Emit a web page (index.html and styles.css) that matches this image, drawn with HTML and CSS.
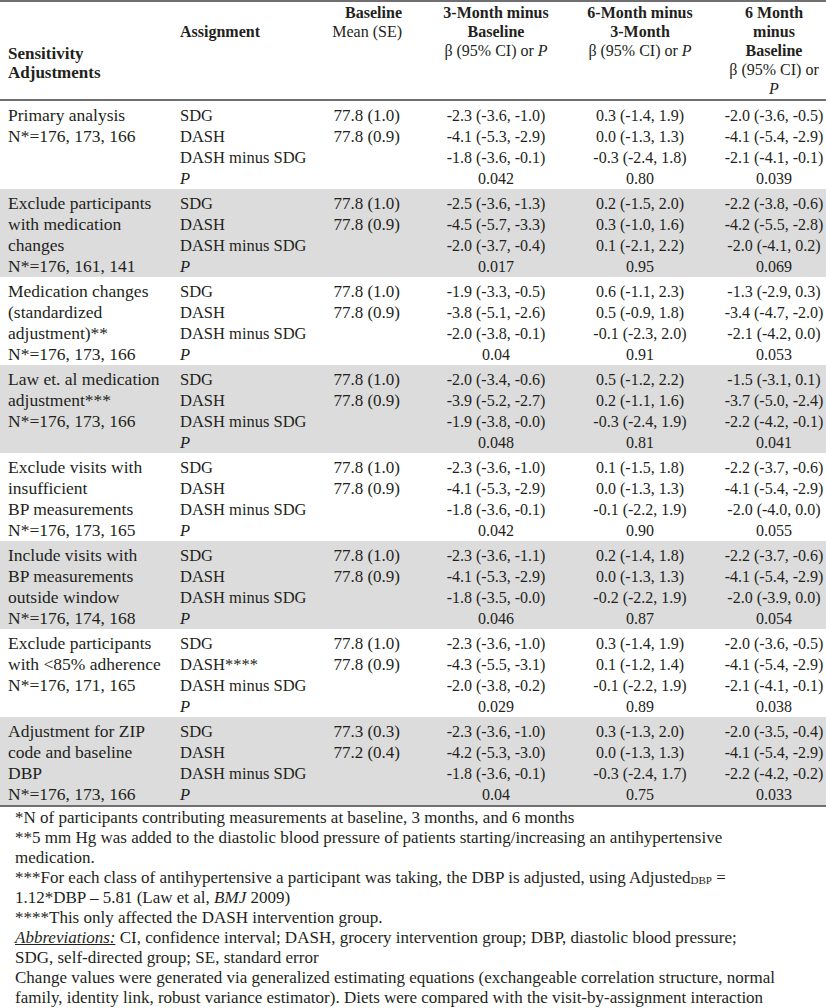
FILE: index.html
```html
<!DOCTYPE html>
<html lang="en">
<head>
<meta charset="utf-8">
<title>Sensitivity Adjustments</title>
<link rel="stylesheet" href="styles.css">
</head>
<body>
<table class="tbl">
  <colgroup>
    <col class="c1"><col class="c2"><col class="c3"><col class="c4"><col class="c5"><col class="c6">
  </colgroup>
  <thead>
    <tr>
      <th class="h-label"><b>Sensitivity<br>Adjustments</b></th>
      <th class="h-assign"><b>Assignment</b></th>
      <th class="h-base"><b>Baseline</b><br>Mean (SE)</th>
      <th class="h-num"><b>3-Month minus<br>Baseline</b><br>β (95% CI) or <i>P</i></th>
      <th class="h-num"><b>6-Month minus<br>3-Month</b><br>β (95% CI) or <i>P</i></th>
      <th class="h-num"><b>6 Month<br>minus<br>Baseline</b><br>β (95% CI) or<br><i>P</i></th>
    </tr>
  </thead>

  <tbody class="grp">
    <tr class="first"><td class="label" rowspan="4">Primary analysis<br>N*=176, 173, 166</td><td class="as">SDG</td><td class="bl">77.8 (1.0)</td><td class="num">-2.3 (-3.6, -1.0)</td><td class="num">0.3 (-1.4, 1.9)</td><td class="num">-2.0 (-3.6, -0.5)</td></tr>
    <tr><td class="as">DASH</td><td class="bl">77.8 (0.9)</td><td class="num">-4.1 (-5.3, -2.9)</td><td class="num">0.0 (-1.3, 1.3)</td><td class="num">-4.1 (-5.4, -2.9)</td></tr>
    <tr><td class="as">DASH minus SDG</td><td class="bl"></td><td class="num">-1.8 (-3.6, -0.1)</td><td class="num">-0.3 (-2.4, 1.8)</td><td class="num">-2.1 (-4.1, -0.1)</td></tr>
    <tr><td class="as"><i>P</i></td><td class="bl"></td><td class="num">0.042</td><td class="num">0.80</td><td class="num">0.039</td></tr>
  </tbody>

  <tbody class="grp shade">
    <tr class="first"><td class="label" rowspan="4">Exclude participants<br>with medication<br>changes<br>N*=176, 161, 141</td><td class="as">SDG</td><td class="bl">77.8 (1.0)</td><td class="num">-2.5 (-3.6, -1.3)</td><td class="num">0.2 (-1.5, 2.0)</td><td class="num">-2.2 (-3.8, -0.6)</td></tr>
    <tr><td class="as">DASH</td><td class="bl">77.8 (0.9)</td><td class="num">-4.5 (-5.7, -3.3)</td><td class="num">0.3 (-1.0, 1.6)</td><td class="num">-4.2 (-5.5, -2.8)</td></tr>
    <tr><td class="as">DASH minus SDG</td><td class="bl"></td><td class="num">-2.0 (-3.7, -0.4)</td><td class="num">0.1 (-2.1, 2.2)</td><td class="num">-2.0 (-4.1, 0.2)</td></tr>
    <tr><td class="as"><i>P</i></td><td class="bl"></td><td class="num">0.017</td><td class="num">0.95</td><td class="num">0.069</td></tr>
  </tbody>

  <tbody class="grp">
    <tr class="first"><td class="label" rowspan="4">Medication changes<br>(standardized<br>adjustment)**<br>N*=176, 173, 166</td><td class="as">SDG</td><td class="bl">77.8 (1.0)</td><td class="num">-1.9 (-3.3, -0.5)</td><td class="num">0.6 (-1.1, 2.3)</td><td class="num">-1.3 (-2.9, 0.3)</td></tr>
    <tr><td class="as">DASH</td><td class="bl">77.8 (0.9)</td><td class="num">-3.8 (-5.1, -2.6)</td><td class="num">0.5 (-0.9, 1.8)</td><td class="num">-3.4 (-4.7, -2.0)</td></tr>
    <tr><td class="as">DASH minus SDG</td><td class="bl"></td><td class="num">-2.0 (-3.8, -0.1)</td><td class="num">-0.1 (-2.3, 2.0)</td><td class="num">-2.1 (-4.2, 0.0)</td></tr>
    <tr><td class="as"><i>P</i></td><td class="bl"></td><td class="num">0.04</td><td class="num">0.91</td><td class="num">0.053</td></tr>
  </tbody>

  <tbody class="grp shade">
    <tr class="first"><td class="label" rowspan="4">Law et. al medication<br>adjustment***<br>N*=176, 173, 166</td><td class="as">SDG</td><td class="bl">77.8 (1.0)</td><td class="num">-2.0 (-3.4, -0.6)</td><td class="num">0.5 (-1.2, 2.2)</td><td class="num">-1.5 (-3.1, 0.1)</td></tr>
    <tr><td class="as">DASH</td><td class="bl">77.8 (0.9)</td><td class="num">-3.9 (-5.2, -2.7)</td><td class="num">0.2 (-1.1, 1.6)</td><td class="num">-3.7 (-5.0, -2.4)</td></tr>
    <tr><td class="as">DASH minus SDG</td><td class="bl"></td><td class="num">-1.9 (-3.8, -0.0)</td><td class="num">-0.3 (-2.4, 1.9)</td><td class="num">-2.2 (-4.2, -0.1)</td></tr>
    <tr><td class="as"><i>P</i></td><td class="bl"></td><td class="num">0.048</td><td class="num">0.81</td><td class="num">0.041</td></tr>
  </tbody>

  <tbody class="grp">
    <tr class="first"><td class="label" rowspan="4">Exclude visits with<br>insufficient<br>BP measurements<br>N*=176, 173, 165</td><td class="as">SDG</td><td class="bl">77.8 (1.0)</td><td class="num">-2.3 (-3.6, -1.0)</td><td class="num">0.1 (-1.5, 1.8)</td><td class="num">-2.2 (-3.7, -0.6)</td></tr>
    <tr><td class="as">DASH</td><td class="bl">77.8 (0.9)</td><td class="num">-4.1 (-5.3, -2.9)</td><td class="num">0.0 (-1.3, 1.3)</td><td class="num">-4.1 (-5.4, -2.9)</td></tr>
    <tr><td class="as">DASH minus SDG</td><td class="bl"></td><td class="num">-1.8 (-3.6, -0.1)</td><td class="num">-0.1 (-2.2, 1.9)</td><td class="num">-2.0 (-4.0, 0.0)</td></tr>
    <tr><td class="as"><i>P</i></td><td class="bl"></td><td class="num">0.042</td><td class="num">0.90</td><td class="num">0.055</td></tr>
  </tbody>

  <tbody class="grp shade">
    <tr class="first"><td class="label" rowspan="4">Include visits with<br>BP measurements<br>outside window<br>N*=176, 174, 168</td><td class="as">SDG</td><td class="bl">77.8 (1.0)</td><td class="num">-2.3 (-3.6, -1.1)</td><td class="num">0.2 (-1.4, 1.8)</td><td class="num">-2.2 (-3.7, -0.6)</td></tr>
    <tr><td class="as">DASH</td><td class="bl">77.8 (0.9)</td><td class="num">-4.1 (-5.3, -2.9)</td><td class="num">0.0 (-1.3, 1.3)</td><td class="num">-4.1 (-5.4, -2.9)</td></tr>
    <tr><td class="as">DASH minus SDG</td><td class="bl"></td><td class="num">-1.8 (-3.5, -0.0)</td><td class="num">-0.2 (-2.2, 1.9)</td><td class="num">-2.0 (-3.9, 0.0)</td></tr>
    <tr><td class="as"><i>P</i></td><td class="bl"></td><td class="num">0.046</td><td class="num">0.87</td><td class="num">0.054</td></tr>
  </tbody>

  <tbody class="grp">
    <tr class="first"><td class="label" rowspan="4">Exclude participants<br>with &lt;85% adherence<br>N*=176, 171, 165</td><td class="as">SDG</td><td class="bl">77.8 (1.0)</td><td class="num">-2.3 (-3.6, -1.0)</td><td class="num">0.3 (-1.4, 1.9)</td><td class="num">-2.0 (-3.6, -0.5)</td></tr>
    <tr><td class="as">DASH****</td><td class="bl">77.8 (0.9)</td><td class="num">-4.3 (-5.5, -3.1)</td><td class="num">0.1 (-1.2, 1.4)</td><td class="num">-4.1 (-5.4, -2.9)</td></tr>
    <tr><td class="as">DASH minus SDG</td><td class="bl"></td><td class="num">-2.0 (-3.8, -0.2)</td><td class="num">-0.1 (-2.2, 1.9)</td><td class="num">-2.1 (-4.1, -0.1)</td></tr>
    <tr><td class="as"><i>P</i></td><td class="bl"></td><td class="num">0.029</td><td class="num">0.89</td><td class="num">0.038</td></tr>
  </tbody>

  <tbody class="grp shade last">
    <tr class="first"><td class="label" rowspan="4">Adjustment for ZIP<br>code and baseline<br>DBP<br>N*=176, 173, 166</td><td class="as">SDG</td><td class="bl">77.3 (0.3)</td><td class="num">-2.3 (-3.6, -1.0)</td><td class="num">0.3 (-1.3, 2.0)</td><td class="num">-2.0 (-3.5, -0.4)</td></tr>
    <tr><td class="as">DASH</td><td class="bl">77.2 (0.4)</td><td class="num">-4.2 (-5.3, -3.0)</td><td class="num">0.0 (-1.3, 1.3)</td><td class="num">-4.1 (-5.4, -2.9)</td></tr>
    <tr><td class="as">DASH minus SDG</td><td class="bl"></td><td class="num">-1.8 (-3.6, -0.1)</td><td class="num">-0.3 (-2.4, 1.7)</td><td class="num">-2.2 (-4.2, -0.2)</td></tr>
    <tr><td class="as"><i>P</i></td><td class="bl"></td><td class="num">0.04</td><td class="num">0.75</td><td class="num">0.033</td></tr>
  </tbody>
</table>

<div class="notes">
  <p>*N of participants contributing measurements at baseline, 3 months, and 6 months</p>
  <p>**5 mm Hg was added to the diastolic blood pressure of patients starting/increasing an antihypertensive</p>
  <p>medication.</p>
  <p>***For each class of antihypertensive a participant was taking, the DBP is adjusted, using Adjusted<sub>DBP</sub> =</p>
  <p>1.12*DBP – 5.81 (Law et al, <i>BMJ</i> 2009)</p>
  <p>****This only affected the DASH intervention group.</p>
  <p><u><i>Abbreviations:</i></u> CI, confidence interval; DASH, grocery intervention group; DBP, diastolic blood pressure;</p>
  <p>SDG, self-directed group; SE, standard error</p>
  <p>Change values were generated via generalized estimating equations (exchangeable correlation structure, normal</p>
  <p>family, identity link, robust variance estimator). Diets were compared with the visit-by-assignment interaction</p>
</div>
</body>
</html>
```

FILE: styles.css
```css
html, body {
  margin: 0;
  padding: 0;
  background: #ffffff;
}

body {
  width: 826px;
  height: 1008px;
  overflow: hidden;
  font-family: "Liberation Serif", "Times New Roman", serif;
  font-size: 17px;
  color: #231f20;
}

.tbl {
  width: 826px;
  table-layout: fixed;
  border-collapse: collapse;
  border-top: 2px solid #707070;
}

.c1 { width: 175px; }
.c2 { width: 130px; }
.c3 { width: 129px; }
.c4 { width: 124px; }
.c5 { width: 164px; }
.c6 { width: 104px; }

/* Header */
thead th {
  font-size: 16px;
  font-weight: normal;
  line-height: 19px;
  vertical-align: top;
  padding: 1px 0 1px 0;
  border-bottom: 2px solid #707070;
  text-align: center;
}

thead th b { font-weight: bold; }

.h-label {
  text-align: left;
  padding-left: 8px;
  padding-top: 42px;
  font-size: 17px;
}

.h-assign {
  text-align: left;
  padding-left: 5px;
  padding-top: 20px;
}

.h-base {
  text-align: right;
  padding-right: 32px;
}

/* Body */
.grp td {
  line-height: 21px;
  padding: 0;
  vertical-align: top;
  white-space: nowrap;
}

.grp tr.first td { padding-top: 4px; }

.shade { background: #dcdcdc; }

.label {
  padding-left: 8px !important;
  font-size: 17.5px;
}

.as {
  padding-left: 5px !important;
  font-size: 16.5px;
}

.bl {
  text-align: right;
  padding-right: 34px !important;
}

.num {
  text-align: center;
  font-size: 16px;
}

/* Footnotes */
.notes {
  border-top: 2px solid #707070;
  padding: 1px 0 0 15px;
}

.notes p {
  margin: 0;
  line-height: 20px;
  white-space: nowrap;
}

.notes sub {
  font-size: 11px;
  vertical-align: -1px;
  line-height: 0;
}
```
